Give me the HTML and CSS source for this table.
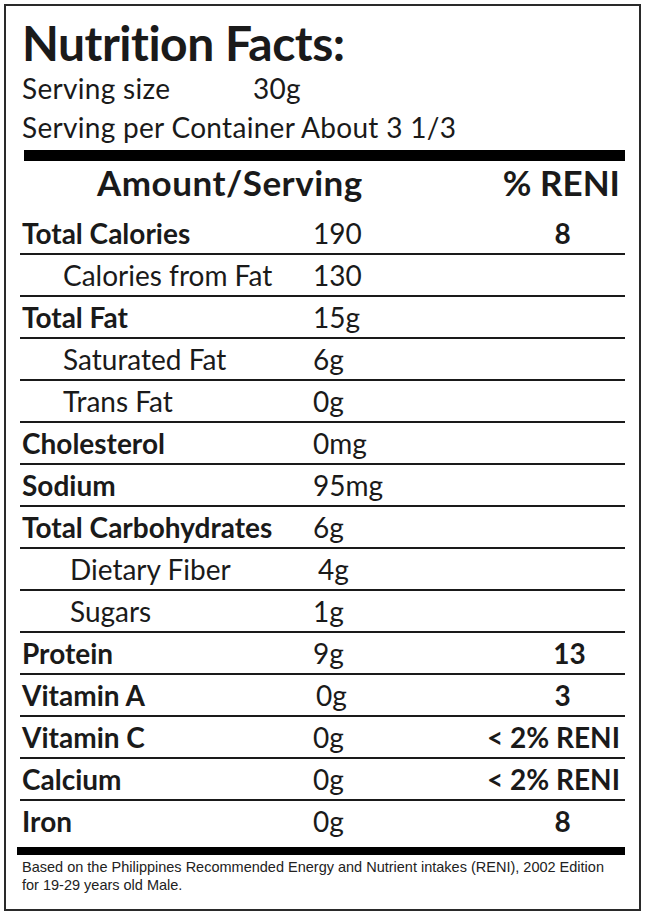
FILE: index.html
```html
<!DOCTYPE html>
<html>
<head>
<meta charset="utf-8">
<link rel="stylesheet" href="styles.css">
</head>
<body>
<div class="label">
  <h1 class="title">Nutrition Facts:</h1>
  <div class="serving"><span class="serving-key">Serving size</span><span>30g</span></div>
  <div class="serving">Serving per Container About 3 1/3</div>
  <div class="bar bar-top"></div>
  <div class="head">
    <span class="head-amount">Amount/Serving</span>
    <span class="head-reni">% RENI</span>
  </div>
  <div class="rows">
    <div class="row"><span class="name bold">Total Calories</span><span class="val">190</span><span class="reni">8</span></div>
    <div class="row"><span class="name sub">Calories from Fat</span><span class="val">130</span><span class="reni"></span></div>
    <div class="row"><span class="name bold">Total Fat</span><span class="val">15g</span><span class="reni"></span></div>
    <div class="row"><span class="name sub">Saturated Fat</span><span class="val">6g</span><span class="reni"></span></div>
    <div class="row"><span class="name sub">Trans Fat</span><span class="val">0g</span><span class="reni"></span></div>
    <div class="row"><span class="name bold">Cholesterol</span><span class="val">0mg</span><span class="reni"></span></div>
    <div class="row"><span class="name bold">Sodium</span><span class="val">95mg</span><span class="reni"></span></div>
    <div class="row"><span class="name bold">Total Carbohydrates</span><span class="val">6g</span><span class="reni"></span></div>
    <div class="row"><span class="name sub2">Dietary Fiber</span><span class="val shift5">4g</span><span class="reni"></span></div>
    <div class="row"><span class="name sub2">Sugars</span><span class="val">1g</span><span class="reni"></span></div>
    <div class="row"><span class="name bold">Protein</span><span class="val">9g</span><span class="reni num13">13</span></div>
    <div class="row"><span class="name bold">Vitamin A</span><span class="val shift3">0g</span><span class="reni">3</span></div>
    <div class="row"><span class="name bold">Vitamin C</span><span class="val">0g</span><span class="reni wide">&lt; 2% RENI</span></div>
    <div class="row"><span class="name bold">Calcium</span><span class="val">0g</span><span class="reni wide">&lt; 2% RENI</span></div>
    <div class="row last"><span class="name bold">Iron</span><span class="val">0g</span><span class="reni">8</span></div>
  </div>
  <div class="bar bar-bottom"></div>
  <p class="note">Based on the Philippines Recommended Energy and Nutrient intakes (RENI), 2002 Edition<br>for 19-29 years old Male.</p>
</div>
</body>
</html>
```

FILE: styles.css
```css
html, body {
  margin: 0;
  padding: 0;
  background: #fff;
}
body {
  width: 647px;
  height: 914px;
  font-family: Lato, "Open Sans", sans-serif;
  color: #1a1a1a;
}
.label {
  box-sizing: border-box;
  margin: 4px 0 0 4px;
  width: 637px;
  height: 907px;
  border: 2px solid #2a2a2a;
  display: flex;
  flex-direction: column;
}
.title {
  margin: 0;
  padding-left: 16px;
  height: 62px;
  line-height: 73px;
  font-size: 48px;
  font-weight: 700;
  letter-spacing: -0.5px;
}
.serving {
  padding-left: 16px;
  height: 39px;
  line-height: 40px;
  font-size: 28px;
  font-weight: 400;
  letter-spacing: 0.3px;
  display: flex;
}
.serving-key {
  width: 231px;
}
.bar {
  background: #000;
}
.bar-top {
  margin: 4px 14px 0 18px;
  height: 11px;
}
.head {
  display: flex;
  justify-content: space-between;
  align-items: center;
  margin: 0 19px 0 14px;
  height: 42px;
  padding-bottom: 10px;
  font-size: 35px;
  font-weight: 700;
}
.head-amount {
  margin-left: 77px;
  letter-spacing: 0.5px;
}
.rows {
  margin: 0 14px;
  display: flex;
  flex-direction: column;
}
.row {
  display: grid;
  grid-template-columns: 291px 1fr 115px;
  align-items: center;
  height: 40px;
  padding: 0 5px 0 2px;
  border-bottom: 2px solid #1a1a1a;
  font-size: 28px;
}
.row.last {
  border-bottom: none;
}
.name {
  white-space: nowrap;
}
.name.bold {
  font-weight: 700;
}
.name.sub {
  padding-left: 41px;
}
.name.sub2 {
  padding-left: 48px;
}
.val.shift5 {
  padding-left: 5px;
}
.val.shift3 {
  padding-left: 3px;
}
.reni {
  font-weight: 700;
  text-align: center;
}
.reni.num13 {
  padding-left: 14px;
}
.reni.wide {
  justify-self: end;
  white-space: nowrap;
}
.bar-bottom {
  margin: 6px 14px 0 11px;
  height: 8px;
}
.note {
  margin: 3px 0 0 16px;
  font-family: "Liberation Sans", Arial, sans-serif;
  font-size: 14.5px;
  line-height: 18px;
  color: #222;
  white-space: nowrap;
}
```
